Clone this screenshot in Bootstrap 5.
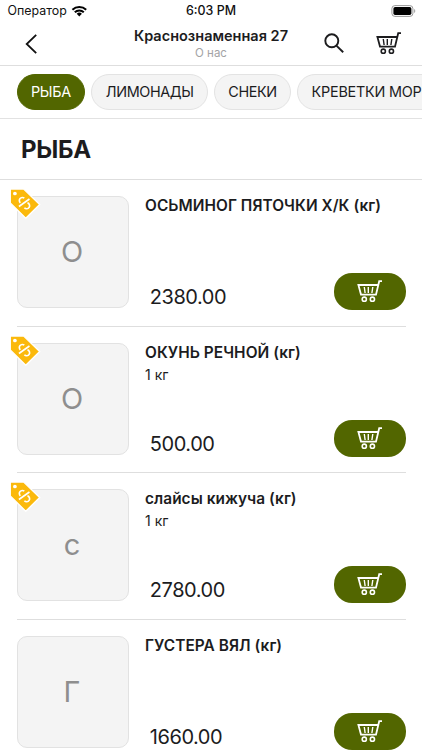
<!DOCTYPE html>
<html lang="ru">
<head>
<meta charset="utf-8">
<meta name="viewport" content="width=device-width, initial-scale=1">
<title>Краснознаменная 27</title>
<link href="https://cdn.jsdelivr.net/npm/bootstrap@5.3.0/dist/css/bootstrap.min.css" rel="stylesheet">
<style>
body{font-family:Inter,"Liberation Sans",sans-serif;color:#1c1c1e;background:#fff;height:750px;overflow:hidden}
svg{display:block;flex:none}
.status{height:22px;font-size:12.4px;line-height:22px;color:#111;padding:0 6px 0 7.5px}
.clock{font-weight:500;font-size:12.4px}
.topbar{height:44px;border-bottom:1px solid #dedede;padding:0 20px 0 24px}
.side{width:78px}
.venue{font-size:14.5px;font-weight:600;line-height:18px;white-space:nowrap}
.about{font-size:11.5px;line-height:15px;color:#a3a3a5;padding-top:1px}
.chips{height:52.5px;border-bottom:1px solid #e2e2e2;padding:8px 0 0 16.5px;gap:6px}
.chip{height:36px;line-height:34px;border:1px solid #e3e3e3;background:#f4f4f4;border-radius:18px;padding:0 13.4px;font-size:14.4px;letter-spacing:-.38px;white-space:nowrap;flex:none}
.chip.on{background:#526600;border-color:#526600;color:#fff;letter-spacing:-.25px}
.chip:last-child{letter-spacing:-.22px;padding-right:40px}
.section-title{height:61.5px;border-bottom:1px solid #dedede;font-size:24px;font-weight:700;letter-spacing:-.3px;line-height:61px;padding-left:21px;margin:0}
.item{height:146.6px;margin:0 16.5px;padding-top:16px;border-bottom:1px solid #dedede}
.thumb{width:112px;height:112px;border:1px solid #e2e2e2;border-radius:10px;background:#f4f4f4;color:#8e8e8e;font-size:29px;flex:none;padding-right:1px}
.tag{position:absolute;left:-10px;top:-10px}
.info{height:114px;margin-left:16.5px}
.name{font-size:15.4px;font-weight:600;line-height:20px;letter-spacing:.06px;margin:0;white-space:nowrap}
.unit{font-size:14px;line-height:20px;margin-top:2px}
.price{font-size:20px;line-height:24px;letter-spacing:-.45px;padding:11.5px 0 0 4.8px}
.buy{width:72px;height:37px;border-radius:18px;background:#526600;color:#fff}
</style>
</head>
<body>
<svg width="0" height="0" class="position-absolute">
<symbol id="cart" viewBox="0 0 26 23"><g fill="none" stroke="currentColor" stroke-width="1.6"><path d="M25 1.2H22.2L19 14.6H4L1.4 5H21.2" stroke-width="1.8"/><path d="M7.3 7l.8 6M11.3 7v6M15.8 7l-.9 6" stroke-width="1.4"/><circle cx="7.3" cy="19.2" r="2.1"/><circle cx="15.4" cy="19.2" r="2.1"/></g></symbol>
<symbol id="sale" viewBox="0 0 32 32"><path d="M2.2 2h13L30.7 16.9 17.2 30.3 2.2 15.5z" fill="#fbb90c" stroke="#fff" stroke-width="1.3"/><circle cx="6.7" cy="6.3" r="1.8" fill="#fff"/><g fill="none" stroke="#fff" stroke-width="1.6"><path d="M20.8 11.6L10.6 18.9"/><path d="M15.8 10.9A2.9 2.9 0 1 0 12 15.3"/><path d="M15.9 20.1A2.9 2.9 0 1 0 18.9 15.4"/></g></symbol>
</svg>
<div class="status d-flex align-items-center position-relative">
<span>Оператор</span>
<svg class="ms-1" width="17" height="12" viewBox="0 0 17 12"><g fill="none" stroke="#000" stroke-width="2"><path d="M1.4 4.7a10 10 0 0 1 13.8 0M3.8 7.2a6.5 6.5 0 0 1 9 0"/></g><path d="M5.7 8.8a3.7 3.7 0 0 1 5.2 0L8.3 11.5z"/></svg>
<span class="clock position-absolute start-50 translate-middle-x">6:03 PM</span>
<svg class="ms-auto" width="25" height="12" viewBox="0 0 25 12"><rect x=".9" y=".6" width="21" height="10.8" rx="3" fill="#fff" stroke="#999"/><rect x="2.4" y="2" width="18" height="8" rx="1.7"/><path d="M23.2 4v4c1.4-.5 1.4-3.5 0-4z" fill="#999"/></svg>
</div>
<header class="topbar d-flex justify-content-between align-items-center">
<div class="side"><svg width="14" height="22" viewBox="0 0 14 22"><path d="M12.2 1.8L2.7 11l9.5 9.2" fill="none" stroke="#111" stroke-width="1.8"/></svg></div>
<div class="text-center pe-1"><div class="venue">Краснознаменная 27</div><div class="about">О нас</div></div>
<div class="side d-flex justify-content-between align-items-center"><svg width="22" height="22" viewBox="0 0 22 22"><g fill="none" stroke="#1c1c1e" stroke-width="1.9"><circle cx="7.8" cy="7.8" r="6.5"/><path d="M12.4 12.6l6.8 6.7"/></g></svg><svg width="26" height="23"><use href="#cart"/></svg></div>
</header>
<nav class="chips d-flex overflow-hidden">
<span class="chip on">РЫБА</span><span class="chip">ЛИМОНАДЫ</span><span class="chip">СНЕКИ</span><span class="chip">КРЕВЕТКИ МОР</span>
</nav>
<h1 class="section-title">РЫБА</h1>
<main>
<article class="item d-flex">
<div class="thumb position-relative d-flex align-items-center justify-content-center">О<svg class="tag" width="33" height="33"><use href="#sale"/></svg></div>
<div class="info flex-grow-1 d-flex flex-column"><h2 class="name">ОСЬМИНОГ ПЯТОЧКИ Х/К (кг)</h2><div class="mt-auto d-flex justify-content-between align-items-center"><span class="price">2380.00</span><span class="buy d-flex align-items-center justify-content-center"><svg width="26" height="23"><use href="#cart"/></svg></span></div></div>
</article>
<article class="item d-flex">
<div class="thumb position-relative d-flex align-items-center justify-content-center">О<svg class="tag" width="33" height="33"><use href="#sale"/></svg></div>
<div class="info flex-grow-1 d-flex flex-column"><h2 class="name">ОКУНЬ РЕЧНОЙ (кг)</h2><div class="unit">1 кг</div><div class="mt-auto d-flex justify-content-between align-items-center"><span class="price">500.00</span><span class="buy d-flex align-items-center justify-content-center"><svg width="26" height="23"><use href="#cart"/></svg></span></div></div>
</article>
<article class="item d-flex">
<div class="thumb position-relative d-flex align-items-center justify-content-center">с<svg class="tag" width="33" height="33"><use href="#sale"/></svg></div>
<div class="info flex-grow-1 d-flex flex-column"><h2 class="name">слайсы кижуча (кг)</h2><div class="unit">1 кг</div><div class="mt-auto d-flex justify-content-between align-items-center"><span class="price">2780.00</span><span class="buy d-flex align-items-center justify-content-center"><svg width="26" height="23"><use href="#cart"/></svg></span></div></div>
</article>
<article class="item d-flex">
<div class="thumb d-flex align-items-center justify-content-center">Г</div>
<div class="info flex-grow-1 d-flex flex-column"><h2 class="name">ГУСТЕРА ВЯЛ (кг)</h2><div class="mt-auto d-flex justify-content-between align-items-center"><span class="price">1660.00</span><span class="buy d-flex align-items-center justify-content-center"><svg width="26" height="23"><use href="#cart"/></svg></span></div></div>
</article>
</main>
<script src="https://cdn.jsdelivr.net/npm/bootstrap@5.3.0/dist/js/bootstrap.bundle.min.js"></script>
</body>
</html>
